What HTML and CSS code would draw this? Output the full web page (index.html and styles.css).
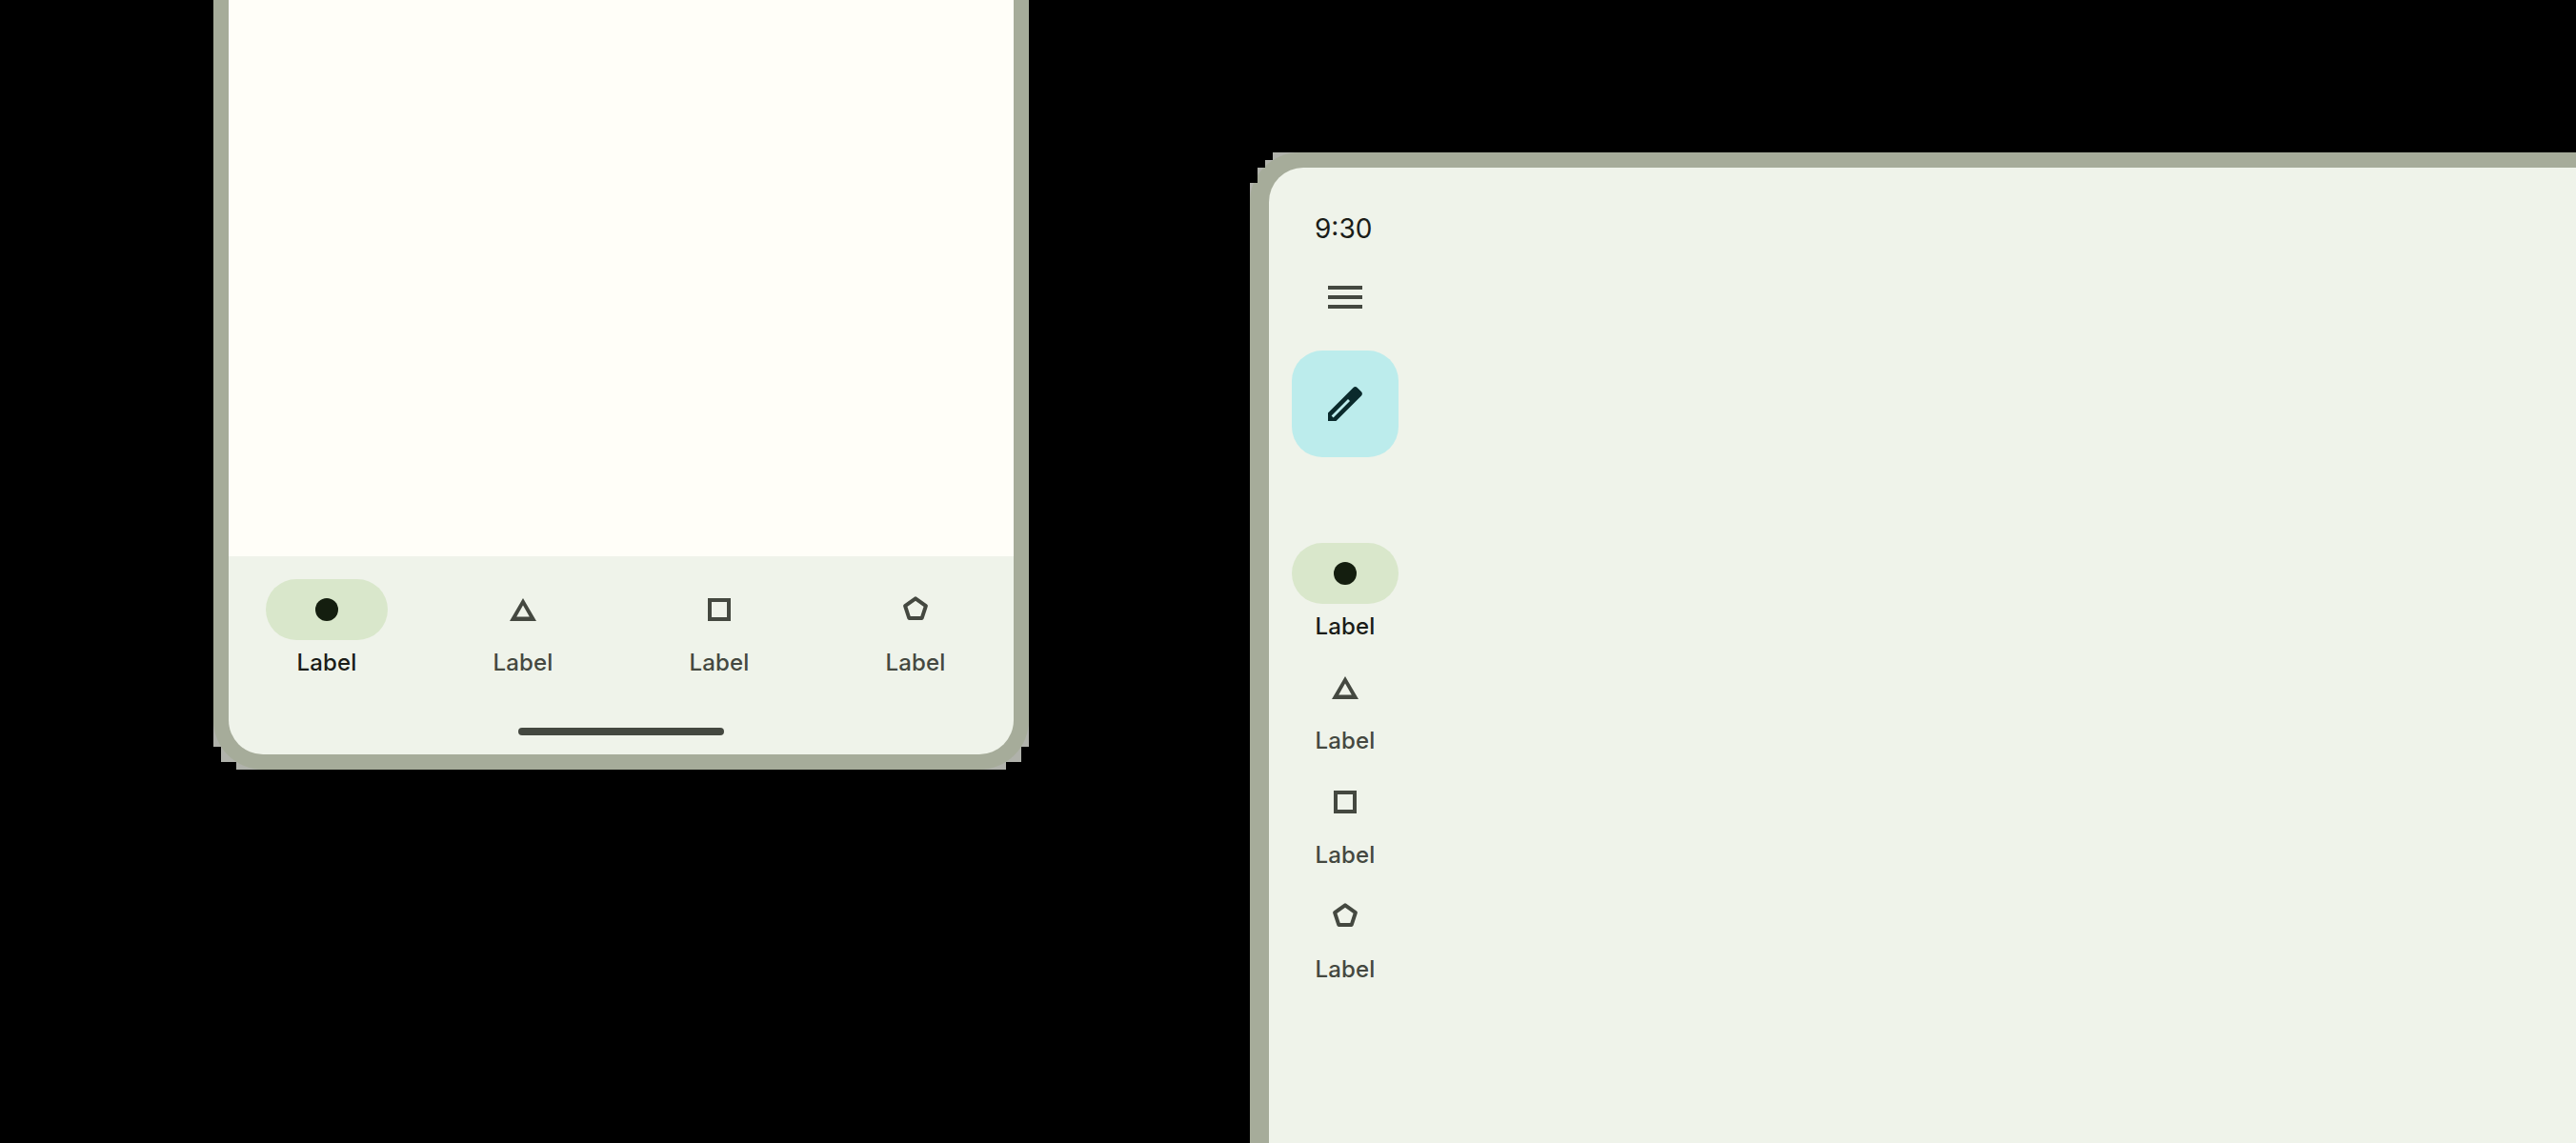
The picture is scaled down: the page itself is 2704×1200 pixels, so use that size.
FILE: index.html
```html
<!DOCTYPE html>
<html lang="en">
<head>
    <meta charset="UTF-8">
    <title>Navigation layouts</title>
    <link rel="stylesheet" href="styles.css">
</head>
<body>
    <div class="phone">
        <div class="phone-frame">
            <div class="phone-screen">
                <div class="phone-body"></div>
                <nav class="nav-bar">
                    <div class="nav-items">
                        <div class="nav-item active">
                            <div class="pill wide">
                                <svg class="icon" viewBox="0 0 36 36"><circle cx="18" cy="18" r="12" fill="currentColor"/></svg>
                            </div>
                            <span class="label">Label</span>
                        </div>
                        <div class="nav-item">
                            <div class="pill wide">
                                <svg class="icon" viewBox="0 0 36 36"><path fill="currentColor" fill-rule="evenodd" d="M18 6L32 30H4zM18 13.4L11.2 25.4h13.6z"/></svg>
                            </div>
                            <span class="label">Label</span>
                        </div>
                        <div class="nav-item">
                            <div class="pill wide">
                                <svg class="icon" viewBox="0 0 36 36"><rect x="8" y="8" width="20" height="20" fill="none" stroke="currentColor" stroke-width="4"/></svg>
                            </div>
                            <span class="label">Label</span>
                        </div>
                        <div class="nav-item">
                            <div class="pill wide">
                                <svg class="icon" viewBox="0 0 36 36"><path fill="none" stroke="currentColor" stroke-width="4" stroke-linejoin="round" d="M18 6.3L28.9 14.2 24.7 27H11.3L7.1 14.2z"/></svg>
                            </div>
                            <span class="label">Label</span>
                        </div>
                    </div>
                    <div class="home-bar"></div>
                </nav>
            </div>
        </div>
    </div>

    <div class="tablet">
        <div class="tablet-frame">
            <div class="tablet-screen">
                <div class="rail">
                    <div class="time">9:30</div>
                    <svg class="menu-icon" viewBox="0 0 24 24"><path fill="currentColor" d="M3 18h18v-2H3v2zm0-5h18v-2H3v2zm0-7v2h18V6H3z"/></svg>
                    <div class="fab">
                        <svg class="fab-icon" viewBox="0 0 48 48"><path fill="currentColor" fill-rule="evenodd" d="M6 42V33.5L32.5 7c1.2-1.2 3-1.2 4.2 0l4.3 4.3c1.2 1.2 1.2 3 0 4.2L14.5 42zM9.6 36.4l2 2L29 21l-2-2z"/></svg>
                    </div>
                    <div class="rail-items">
                        <div class="nav-item active">
                            <div class="pill">
                                <svg class="icon" viewBox="0 0 36 36"><circle cx="18" cy="18" r="12" fill="currentColor"/></svg>
                            </div>
                            <span class="label">Label</span>
                        </div>
                        <div class="nav-item">
                            <div class="pill">
                                <svg class="icon" viewBox="0 0 36 36"><path fill="currentColor" fill-rule="evenodd" d="M18 6L32 30H4zM18 13.4L11.2 25.4h13.6z"/></svg>
                            </div>
                            <span class="label">Label</span>
                        </div>
                        <div class="nav-item">
                            <div class="pill">
                                <svg class="icon" viewBox="0 0 36 36"><rect x="8" y="8" width="20" height="20" fill="none" stroke="currentColor" stroke-width="4"/></svg>
                            </div>
                            <span class="label">Label</span>
                        </div>
                        <div class="nav-item">
                            <div class="pill">
                                <svg class="icon" viewBox="0 0 36 36"><path fill="none" stroke="currentColor" stroke-width="4" stroke-linejoin="round" d="M18 6.3L28.9 14.2 24.7 27H11.3L7.1 14.2z"/></svg>
                            </div>
                            <span class="label">Label</span>
                        </div>
                    </div>
                </div>
            </div>
        </div>
    </div>
</body>
</html>
```

FILE: styles.css
```css
html, body {
    height: 100%;
}

body {
    margin: 0;
    background-color: #000;
    color: #444840;
    font-family: Inter, "Liberation Sans", sans-serif;
    display: flex;
    align-items: flex-start;
    gap: 232px;
    padding-left: 224px;
    overflow: hidden;
}

/* phone */
.phone {
    flex: none;
    width: 856px;
    height: 808px;
    background-color: #b0b2ab;
    clip-path: polygon(0 0, 856px 0, 856px 784px, 848px 784px, 848px 800px, 832px 800px, 832px 808px, 24px 808px, 24px 800px, 8px 800px, 8px 784px, 0 784px);
}

.phone-frame {
    box-sizing: border-box;
    height: 100%;
    padding: 0 16px 16px;
    background-color: #a6ac9a;
    border-radius: 0 0 52px 52px;
}

.phone-screen {
    height: 100%;
    display: flex;
    flex-direction: column;
    border-radius: 0 0 36px 36px;
    overflow: hidden;
}

.phone-body {
    flex: 1;
    background-color: #fffef8;
}

.nav-bar {
    height: 208px;
    padding-top: 24px;
    box-sizing: border-box;
    background-color: #eff3ea;
}

.nav-items {
    display: flex;
}

.nav-items .nav-item {
    flex: 1;
}

.home-bar {
    width: 216px;
    height: 8px;
    margin: 52px auto 0;
    border-radius: 4px;
    background-color: #444840;
}

/* shared nav item */
.nav-item {
    display: flex;
    flex-direction: column;
    align-items: center;
}

.pill {
    width: 112px;
    height: 64px;
    display: flex;
    align-items: center;
    justify-content: center;
    border-radius: 32px;
}

.pill.wide {
    width: 128px;
}

.active .pill {
    background-color: #d9e7cb;
    color: #141e0f;
}

.icon {
    width: 36px;
    height: 36px;
}

.label {
    display: block;
    margin-top: 8px;
    font-size: 24px;
    line-height: 32px;
    font-weight: 500;
    letter-spacing: 0.2px;
}

.active .label {
    color: #1a1c18;
}

/* tablet */
.tablet {
    flex: none;
    width: 1400px;
    height: 1040px;
    margin-top: 160px;
    background-color: #b0b2ab;
    clip-path: polygon(24px 0, 100% 0, 100% 100%, 0 100%, 0 32px, 8px 32px, 8px 16px, 16px 16px, 16px 8px, 24px 8px);
}

.tablet-frame {
    box-sizing: border-box;
    height: 100%;
    padding: 16px 0 0 20px;
    background-color: #a6ac9a;
    border-radius: 52px 0 0 0;
}

.tablet-screen {
    height: 100%;
    background-color: #eff3ea;
    border-radius: 36px 0 0 0;
}

.rail {
    width: 160px;
    display: flex;
    flex-direction: column;
    align-items: center;
}

.time {
    align-self: flex-start;
    margin: 44px 0 0 48px;
    font-size: 28px;
    line-height: 40px;
    color: #1a1c18;
}

.menu-icon {
    width: 48px;
    height: 48px;
    margin-top: 28px;
    color: #444840;
}

.fab {
    width: 112px;
    height: 112px;
    margin-top: 32px;
    display: flex;
    align-items: center;
    justify-content: center;
    border-radius: 32px;
    background-color: #bcecec;
    color: #0a2a2c;
}

.fab-icon {
    width: 48px;
    height: 48px;
}

.rail-items {
    margin-top: 90px;
    display: flex;
    flex-direction: column;
    gap: 16px;
}
```
